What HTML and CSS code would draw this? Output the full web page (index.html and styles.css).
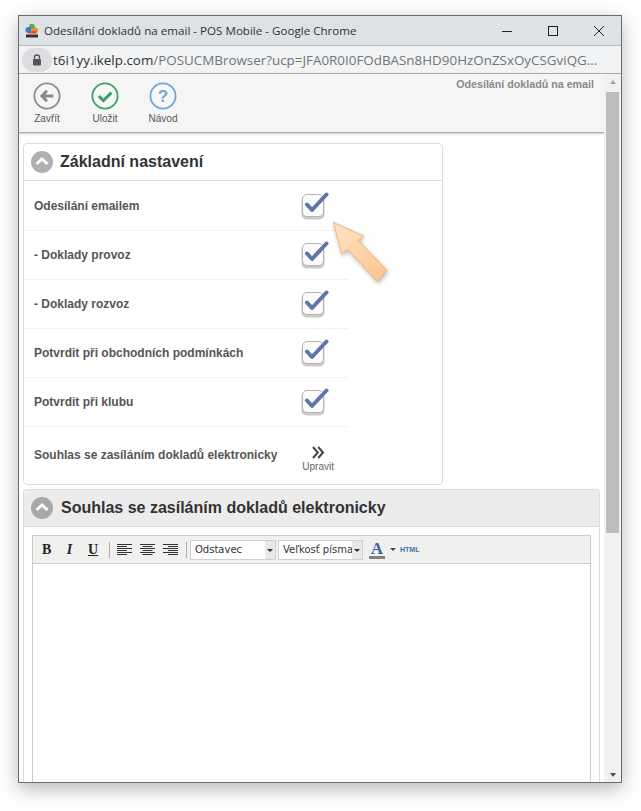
FILE: index.html
```html
<!DOCTYPE html>
<html lang="cs">
<head>
<meta charset="utf-8">
<title>Odesílání dokladů na email</title>
<link rel="stylesheet" href="styles.css">
</head>
<body>
<div class="window">
  <header class="titlebar">
    <svg class="favicon" width="14" height="16" viewBox="0 0 14 16"><circle cx="7" cy="3.500" r="2.800" fill="#4caf50"/><circle cx="3.500" cy="7" r="3" fill="#2f80c8"/><circle cx="10" cy="7.500" r="3" fill="#f08a24"/><rect x="3" y="8" width="8" height="2.500" fill="#e04a3a"/><rect x="1" y="11.500" width="12" height="3" fill="#333"/></svg>
    <span class="title-text">Odesílání dokladů na email - POS Mobile - Google Chrome</span>
    <svg class="win-btn first" width="12" height="12" viewBox="0 0 12 12"><path d="M1 6.500h10" stroke="#222" fill="none"/></svg>
    <svg class="win-btn" width="12" height="12" viewBox="0 0 12 12"><rect x="1.500" y="1.500" width="9" height="9" stroke="#222" fill="none"/></svg>
    <svg class="win-btn" width="12" height="12" viewBox="0 0 12 12"><path d="M1 1l10 10M11 1L1 11" stroke="#222" fill="none"/></svg>
  </header>
  <div class="addressbar">
    <span class="lock"><svg width="10" height="12" viewBox="0 0 10 12"><path d="M2.500 5V3.500a2.500 2.500 0 0 1 5 0V5" stroke="#555" stroke-width="1.300" fill="none"/><rect x="1" y="5" width="8" height="6.500" rx="1" fill="#555"/></svg></span>
    <span class="url"><span class="host">t6i1yy.ikelp.com</span>/POSUCMBrowser?ucp=JFA0R0I0FOdBASn8HD90HzOnZSxOyCSGviQG...</span>
  </div>
  <div class="client">
    <main class="page">
      <nav class="toolbar">
        <a class="tool"><svg width="30" height="30" viewBox="0 0 30 30"><circle cx="15" cy="15" r="12.600" fill="#f7f7f7" stroke="#8d8d8d" stroke-width="1.800"/><path d="M21.500 15H11M15 9.800L9.800 15l5.200 5.200" fill="none" stroke="#8a8a8a" stroke-width="2.800"/></svg><span>Zavřít</span></a>
        <a class="tool"><svg width="30" height="30" viewBox="0 0 30 30"><circle cx="15" cy="15" r="12.600" fill="#f7f7f7" stroke="#3fa066" stroke-width="1.800"/><path d="M8.800 15l4.600 4.600 8-8" fill="none" stroke="#3fa066" stroke-width="3"/></svg><span>Uložit</span></a>
        <a class="tool"><svg width="30" height="30" viewBox="0 0 30 30"><circle cx="15" cy="15" r="12.600" fill="#f7f7f7" stroke="#6fa6d6" stroke-width="1.800"/><text x="15" y="21" text-anchor="middle" class="q">?</text></svg><span>Návod</span></a>
        <div class="page-name">Odesílání dokladů na email</div>
      </nav>
      <div class="content">
        <section class="card settings">
          <h2 class="card-head"><span class="collapse"><svg width="22" height="22" viewBox="0 0 22 22"><circle cx="11" cy="11" r="11" fill="#b0b0b0"/><path d="M5.500 13l5.500-5 5.500 5" fill="none" stroke="#fff" stroke-width="3"/></svg></span>Základní nastavení</h2>
          <div class="row"><label>Odesílání emailem</label><svg class="check" width="30" height="30" viewBox="0 0 30 30"><use href="#cb"/></svg></div>
          <div class="row"><label>- Doklady provoz</label><svg class="check" width="30" height="30" viewBox="0 0 30 30"><use href="#cb"/></svg></div>
          <div class="row"><label>- Doklady rozvoz</label><svg class="check" width="30" height="30" viewBox="0 0 30 30"><use href="#cb"/></svg></div>
          <div class="row"><label>Potvrdit při obchodních podmínkách</label><svg class="check" width="30" height="30" viewBox="0 0 30 30"><use href="#cb"/></svg></div>
          <div class="row"><label>Potvrdit při klubu</label><svg class="check" width="30" height="30" viewBox="0 0 30 30"><use href="#cb"/></svg></div>
          <div class="row last"><label>Souhlas se zasíláním dokladů elektronicky</label>
            <a class="edit"><svg width="14" height="13" viewBox="0 0 14 13"><path d="M2 1l4.800 5.500L2 12M7.200 1L12 6.500 7.200 12" fill="none" stroke="#444" stroke-width="2"/></svg><span>Upravit</span></a>
          </div>
        </section>
        <section class="card consent">
          <h2 class="card-head shaded"><span class="collapse"><svg width="22" height="22" viewBox="0 0 22 22"><circle cx="11" cy="11" r="11" fill="#a8a8a8"/><path d="M5.500 13l5.500-5 5.500 5" fill="none" stroke="#fff" stroke-width="3"/></svg></span>Souhlas se zasíláním dokladů elektronicky</h2>
          <div class="editor">
            <div class="ed-bar">
              <b class="ed-b">B</b><i class="ed-i">I</i><u class="ed-u">U</u>
              <span class="sep"></span>
              <svg class="al" width="15" height="11" viewBox="0 0 15 11"><path d="M0 .5h15M0 2.500h10M0 4.500h15M0 6.500h10M0 8.500h15M0 10.500h10" stroke="#333"/></svg>
              <svg class="al" width="15" height="11" viewBox="0 0 15 11"><path d="M0 .5h15M2.500 2.500h10M0 4.500h15M2.500 6.500h10M0 8.500h15M2.500 10.500h10" stroke="#333"/></svg>
              <svg class="al" width="15" height="11" viewBox="0 0 15 11"><path d="M0 .5h15M5 2.500h10M0 4.500h15M5 6.500h10M0 8.500h15M5 10.500h10" stroke="#333"/></svg>
              <span class="sep"></span>
              <span class="sel s1"><span class="sel-text">Odstavec</span><span class="sel-arrow"></span></span>
              <span class="sel s2"><span class="sel-text">Veľkosť písma</span><span class="sel-arrow"></span></span>
              <span class="color-a">A</span><span class="caret"></span><span class="html">HTML</span>
            </div>
          </div>
        </section>
      </div>
    </main>
    <aside class="scrollbar">
      <span class="sb-up"></span>
      <span class="sb-thumb"></span>
      <span class="sb-down"></span>
    </aside>
  </div>
  <svg class="pointer" width="66" height="72" viewBox="0 0 66 72">
    <defs>
      <linearGradient id="ag" x1="0" y1="0" x2="1" y2="1"><stop offset="0" stop-color="#fee3c8"/><stop offset="1" stop-color="#fdc48c"/></linearGradient>
    </defs>
    <path d="M3.500 2.500L33.500 16 28 20.300 57 50.300 47.500 61.700 17.500 29.300 11.500 33.700z" fill="url(#ag)" stroke="#f2b47c" stroke-linejoin="round"/>
  </svg>
</div>
<svg class="defs" width="0" height="0">
  <defs>
    <g id="cb">
      <rect x="2.500" y="6" width="23" height="23.500" rx="5" fill="#8a8a8a" opacity=".45"/>
      <rect x="3.500" y="4.500" width="21" height="22" rx="4.500" fill="#fbfbfb" stroke="#b5b5b5"/>
      <path d="M8 14.500l5 5.500L27.500 4.500" fill="none" stroke="#6176a8" stroke-width="4" stroke-linecap="round" stroke-linejoin="round"/>
    </g>
  </defs>
</svg>
</body>
</html>
```
FILE: styles.css
```css
html, body { margin: 0; padding: 0; background: #fff; }
body { height: 811px; overflow: hidden; padding: 15px 0 0 18px; box-sizing: border-box; font-family: "Liberation Sans", Arial, sans-serif; color: #444; }
.window { position: relative; width: 604px; height: 768px; box-sizing: border-box; border: 1px solid #6b6b6b; display: flex; flex-direction: column; background: #fff; box-shadow: 0 6px 18px rgba(0,0,0,.28); overflow: visible; }
.titlebar { height: 30px; flex: none; background: #dee1e6; display: flex; align-items: center; padding-left: 6px; box-sizing: border-box; border-bottom: 1px solid #b9bcc0; }
.favicon { margin-right: 5px; flex: none; }
.title-text { font: 11.600px "Open Sans", sans-serif; color: #333; white-space: nowrap; }
.win-btn { flex: none; margin-left: 34px; }
.win-btn.first { margin-left: auto; }
.win-btn:last-child { margin-right: 16px; }
.addressbar { height: 28px; flex: none; background: #f1f3f4; display: flex; align-items: center; box-sizing: border-box; border-bottom: 1px solid #a8a8a8; padding-left: 3px; white-space: nowrap; overflow: hidden; }
.lock { width: 30px; height: 24px; border-radius: 12px; background: #dcdde0; display: flex; align-items: center; justify-content: center; flex: none; margin-right: 1px; }
.url { font: 13.400px "Open Sans", sans-serif; color: #70757a; }
.host { color: #333; }
.client { flex: 1; min-height: 0; display: flex; }
.page { flex: 1; min-width: 0; display: flex; flex-direction: column; overflow: hidden; }
.toolbar { height: 59px; flex: none; background: #f5f5f5; border-bottom: 1px solid #a9a9a9; box-shadow: 0 1px 2px rgba(0,0,0,.2); display: flex; box-sizing: border-box; padding: 7px 0 0 13px; position: relative; }
.tool { width: 30px; margin-right: 28px; display: flex; flex-direction: column; align-items: center; font-size: 10px; color: #555; }
.tool span { margin-top: 2px; white-space: nowrap; }
.q { font: bold 17px "Liberation Sans", sans-serif; fill: #6fa6d6; }
.page-name { margin-left: auto; margin-right: 10px; margin-top: -3px; font-size: 10.700px; font-weight: bold; color: #8a8a8a; white-space: nowrap; }
.content { flex: 1; min-height: 0; padding: 10px 4px 0 4px; }
.card { border: 1px solid #dcdcdc; border-radius: 4px; box-sizing: border-box; background: #fff; }
.settings { width: 420px; height: 342px; margin-bottom: 4px; }
.card-head { margin: 0 0 1px; height: 37px; box-sizing: border-box; border-bottom: 1px solid #dcdcdc; display: flex; align-items: center; font-size: 16px; font-weight: bold; color: #333; padding-left: 7px; white-space: nowrap; }
.collapse { display: flex; margin-right: 7px; }
.row { width: 324px; height: 49px; box-sizing: border-box; border-bottom: 1px solid #f2f2f2; display: flex; align-items: center; justify-content: space-between; padding: 0 19px 0 10px; font-size: 12px; font-weight: bold; color: #555; }
.row.last { border-bottom: 0; height: 56px; padding-right: 14px; }
.check { flex: none; margin-top: -2px; }
.edit { display: flex; flex-direction: column; align-items: center; font-size: 10px; font-weight: normal; color: #666; margin-top: 8px; }
.edit span { margin-top: 2px; }
.consent { width: 577px; height: 300px; border-bottom: 0; }
.shaded { background: #ececec; border-radius: 4px 4px 0 0; }
.shaded .collapse { margin-right: 8px; }
.editor { margin: 8px 8px 0 8px; height: 260px; border: 1px solid #ccc; border-bottom: 0; }
.ed-bar { height: 28px; box-sizing: border-box; background: #f0f0ee; border-bottom: 1px solid #ccc; display: flex; align-items: center; padding-left: 9px; }
.ed-b, .ed-i, .ed-u { font: bold 14px "Liberation Serif", serif; color: #222; width: 9px; margin-right: 14px; text-align: center; }
.ed-i { font-style: italic; }
.ed-u { margin-right: 12px; }
.sep { width: 1px; height: 16px; background: #aaa; margin-right: 7px; flex: none; }
.al { flex: none; margin-right: 8px; }
.sel { height: 20px; box-sizing: border-box; border: 1px solid #d0d0d0; background: #e8e8e8; display: flex; margin-right: 2px; flex: none; }
.s1 { width: 86px; margin-left: -4px; }
.s2 { width: 85px; }
.sel-text { background: #fff; font: 10px "DejaVu Sans", sans-serif; color: #333; line-height: 18px; padding-left: 4px; white-space: nowrap; overflow: hidden; flex: 1; min-width: 0; }
.sel-arrow { flex: none; width: 10px; position: relative; }
.sel-arrow::after { content: ""; position: absolute; left: 2px; top: 8px; border: 3px solid transparent; border-top-color: #333; border-bottom: 0; }
.color-a { font: bold 17px/15px "Liberation Serif", serif; color: #3e5f9f; width: 16px; text-align: center; border-bottom: 3px solid #808080; margin-left: 4px; flex: none; }
.caret { border: 3px solid transparent; border-top-color: #444; border-bottom: 0; margin-left: 5px; flex: none; }
.html { font-size: 7px; font-weight: bold; color: #3f6fb0; margin-left: 4px; }
.scrollbar { width: 17px; flex: none; background: #f1f1f1; display: flex; flex-direction: column; align-items: center; position: relative; }
.sb-up, .sb-down { position: absolute; border: 4px solid transparent; border-left-width: 3.500px; border-right-width: 3.500px; }
.sb-up { top: 6px; border-bottom-color: #a5a5a5; border-top: 0; }
.sb-down { bottom: 5px; border-top-color: #505050; border-bottom: 0; }
.sb-thumb { width: 13px; height: 441px; margin-top: 18px; background: #bdbdbd; }
.pointer { position: absolute; left: 311px; top: 204px; filter: drop-shadow(1px 2px 2px rgba(0,0,0,.25)); }
.defs { position: absolute; }
```
